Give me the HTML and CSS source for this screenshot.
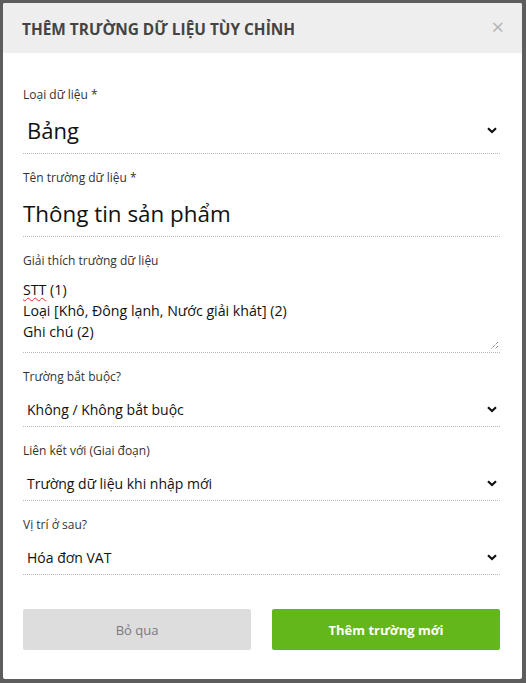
FILE: index.html
```html
<!DOCTYPE html>
<html lang="vi">
<head>
<meta charset="utf-8">
<link rel="stylesheet" href="styles.css">
</head>
<body>
<div class="modal">
  <div class="modal-header">
    <h1 class="title">THÊM TRƯỜNG DỮ LIỆU TÙY CHỈNH</h1>
    <span class="close">×</span>
  </div>
  <div class="modal-body">
    <div class="field f1">
      <div class="label">Loại dữ liệu *</div>
      <div class="control big select">
        <span class="value">Bảng</span>
        <svg class="chev" width="10" height="7" viewBox="0 0 10 7"><polyline points="1,1.2 5,5 9,1.2" fill="none" stroke="#111" stroke-width="2.2"/></svg>
      </div>
    </div>
    <div class="field f2">
      <div class="label">Tên trường dữ liệu *</div>
      <div class="control big input"><span class="value">Thông tin sản phẩm</span></div>
    </div>
    <div class="field f3">
      <div class="label">Giải thích trường dữ liệu</div>
      <div class="control textarea">
        <div class="line"><span class="spell">STT</span> (1)</div>
        <div class="line">Loại [Khô, Đông lạnh, Nước giải khát] (2)</div>
        <div class="line">Ghi chú (2)</div>
        <svg class="grip" width="9" height="9" viewBox="0 0 9 9"><path d="M8 1 L1 8 M8 5 L5 8" stroke="#555" stroke-width="1" stroke-dasharray="1 1"/></svg>
      </div>
    </div>
    <div class="field f4">
      <div class="label">Trường bắt buộc?</div>
      <div class="control small select">
        <span class="value">Không / Không bắt buộc</span>
        <svg class="chev" width="10" height="7" viewBox="0 0 10 7"><polyline points="1,1.2 5,5 9,1.2" fill="none" stroke="#111" stroke-width="2.2"/></svg>
      </div>
    </div>
    <div class="field f5">
      <div class="label">Liên kết với (Giai đoạn)</div>
      <div class="control small select">
        <span class="value">Trường dữ liệu khi nhập mới</span>
        <svg class="chev" width="10" height="7" viewBox="0 0 10 7"><polyline points="1,1.2 5,5 9,1.2" fill="none" stroke="#111" stroke-width="2.2"/></svg>
      </div>
    </div>
    <div class="field f6">
      <div class="label">Vị trí ở sau?</div>
      <div class="control small select">
        <span class="value">Hóa đơn VAT</span>
        <svg class="chev" width="10" height="7" viewBox="0 0 10 7"><polyline points="1,1.2 5,5 9,1.2" fill="none" stroke="#111" stroke-width="2.2"/></svg>
      </div>
    </div>
    <div class="actions">
      <button class="btn btn-cancel">Bỏ qua</button>
      <button class="btn btn-primary">Thêm trường mới</button>
    </div>
  </div>
</div>
</body>
</html>
```
FILE: styles.css
```css
html, body {
  margin: 0;
  padding: 0;
}
body {
  background: #5d5d5d;
  width: 526px;
  height: 683px;
  overflow: hidden;
  font-family: "Open Sans", "Noto Sans", sans-serif;
  color: #222;
}
.modal {
  margin: 3px 0 0 3px;
  width: 519px;
  height: 676px;
  background: #fff;
  border-radius: 2px;
  overflow: hidden;
  display: flex;
  flex-direction: column;
}
.modal-header {
  height: 50px;
  background: #eeeeee;
  display: flex;
  align-items: center;
  justify-content: space-between;
  padding: 0 18px 0 19px;
  box-sizing: border-box;
}
.title {
  margin: 2px 0 0;
  font-size: 15.4px;
  font-weight: 700;
  color: #444;
  letter-spacing: 0;
}
.close {
  font-size: 22px;
  color: #b5b5b5;
  line-height: 1;
  margin-top: -5px;
}
.modal-body {
  padding: 34px 22px 0 20px;
  display: flex;
  flex-direction: column;
}
.field {
  display: flex;
  flex-direction: column;
  margin-bottom: 16px;
}
.label {
  font-size: 12px;
  line-height: 16px;
  color: #333;
}
.control {
  position: relative;
  display: flex;
  align-items: center;
  border-bottom: 1px dotted #b8b8b8;
  box-sizing: border-box;
  color: #111;
}
.big {
  font-size: 22px;
  height: 51px;
  padding-top: 4px;
}
.input .value {
  font-size: 22.4px;
}
.f1 .value {
  padding-left: 4px;
}
.small {
  font-size: 14px;
  height: 42px;
  padding-top: 7px;
}
.small .value {
  padding-left: 4px;
}
.select {
  justify-content: space-between;
}
.chev {
  margin-right: 3px;
}
.textarea {
  flex-direction: column;
  align-items: flex-start;
  height: 84px;
  padding-top: 10px;
  font-size: 14.2px;
}
.line {
  line-height: 21px;
}
.spell {
  text-decoration: underline wavy #e0302a;
  text-decoration-thickness: 1px;
  text-underline-offset: 2px;
}
.grip {
  position: absolute;
  right: 1px;
  bottom: 2px;
}
.actions {
  display: flex;
  gap: 21px;
  margin-top: 18px;
}
.btn {
  flex: 1;
  height: 41px;
  border: 0;
  border-radius: 2px;
  font-family: "Open Sans", "Noto Sans", sans-serif;
  font-size: 13px;
  padding: 0;
}
.btn-cancel {
  background: #dddddd;
  color: #7a7a7a;
}
.btn-primary {
  background: #64b71a;
  color: #fff;
  font-weight: 700;
}
```
